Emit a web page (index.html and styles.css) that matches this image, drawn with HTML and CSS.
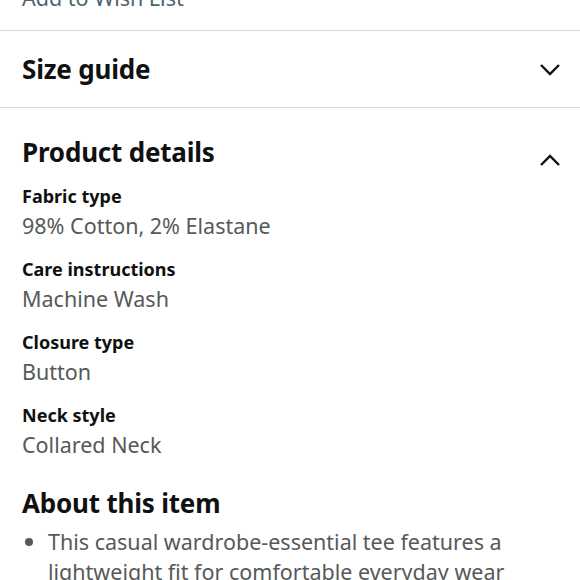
FILE: index.html
```html
<!DOCTYPE html>
<html>
<head>
<meta charset="utf-8">
<link rel="stylesheet" href="styles.css">
</head>
<body>
<div class="page">
  <div class="wish"><span class="wish-text">Add to Wish List</span></div>
  <div class="row size">
    <h2 class="title">Size guide</h2>
    <svg class="chev down" width="22" height="14" viewBox="0 0 22 14"><path d="M2 2 L11 11 L20 2" fill="none" stroke="#0f1111" stroke-width="2.4"/></svg>
  </div>
  <div class="details">
    <div class="row head">
      <h2 class="title">Product details</h2>
      <svg class="chev up" width="22" height="14" viewBox="0 0 22 14"><path d="M2 12 L11 3 L20 12" fill="none" stroke="#0f1111" stroke-width="2.4"/></svg>
    </div>
    <dl class="specs">
      <div class="spec"><dt>Fabric type</dt><dd>98% Cotton, 2% Elastane</dd></div>
      <div class="spec"><dt>Care instructions</dt><dd>Machine Wash</dd></div>
      <div class="spec"><dt>Closure type</dt><dd>Button</dd></div>
      <div class="spec"><dt>Neck style</dt><dd>Collared Neck</dd></div>
    </dl>
  </div>
  <div class="about">
    <h2 class="title">About this item</h2>
    <ul class="bullets">
      <li>This casual wardrobe-essential tee features a lightweight fit for comfortable everyday wear</li>
    </ul>
  </div>
</div>
</body>
</html>
```
FILE: styles.css
```css
html, body {
  margin: 0;
  padding: 0;
  background: #ffffff;
}
body {
  font-family: "Noto Sans", "Open Sans", sans-serif;
  color: #0f1111;
  width: 580px;
  height: 580px;
  overflow: hidden;
}
.page {
  display: flex;
  flex-direction: column;
}
.wish {
  height: 30px;
  border-bottom: 1px solid #d5d9d9;
  overflow: hidden;
}
.wish-text {
  display: block;
  margin-top: -15px;
  padding-left: 22px;
  font-size: 21.5px;
  line-height: 26px;
  color: #4a6470;
}
.row {
  display: flex;
  align-items: center;
  justify-content: space-between;
  padding: 0 19px 0 22px;
}
.size {
  height: 76px;
  border-bottom: 1px solid #d5d9d9;
}
.chev.down {
  margin-top: 2px;
}
.title {
  margin: 0;
  font-size: 26px;
  font-weight: 700;
  line-height: 32px;
  letter-spacing: -0.2px;
}
.details {
  padding-top: 28px;
}
.head {
  height: 32px;
}
.chev.up {
  margin-top: 15px;
}
.specs {
  margin: 13px 0 0;
  padding: 0 22px;
  display: flex;
  flex-direction: column;
  gap: 13px;
}
.spec {
  display: flex;
  flex-direction: column;
}
dt {
  font-size: 18px;
  font-weight: 700;
  line-height: 30px;
}
dd {
  margin: 0;
  font-size: 21.5px;
  line-height: 30px;
  color: #565959;
}
.about {
  padding: 27px 22px 0;
}
.bullets {
  margin: 7px 0 0;
  padding-left: 26px;
  font-size: 21.5px;
  line-height: 30px;
  color: #565959;
}
.bullets li::marker {
  font-size: 22px;
}
```
